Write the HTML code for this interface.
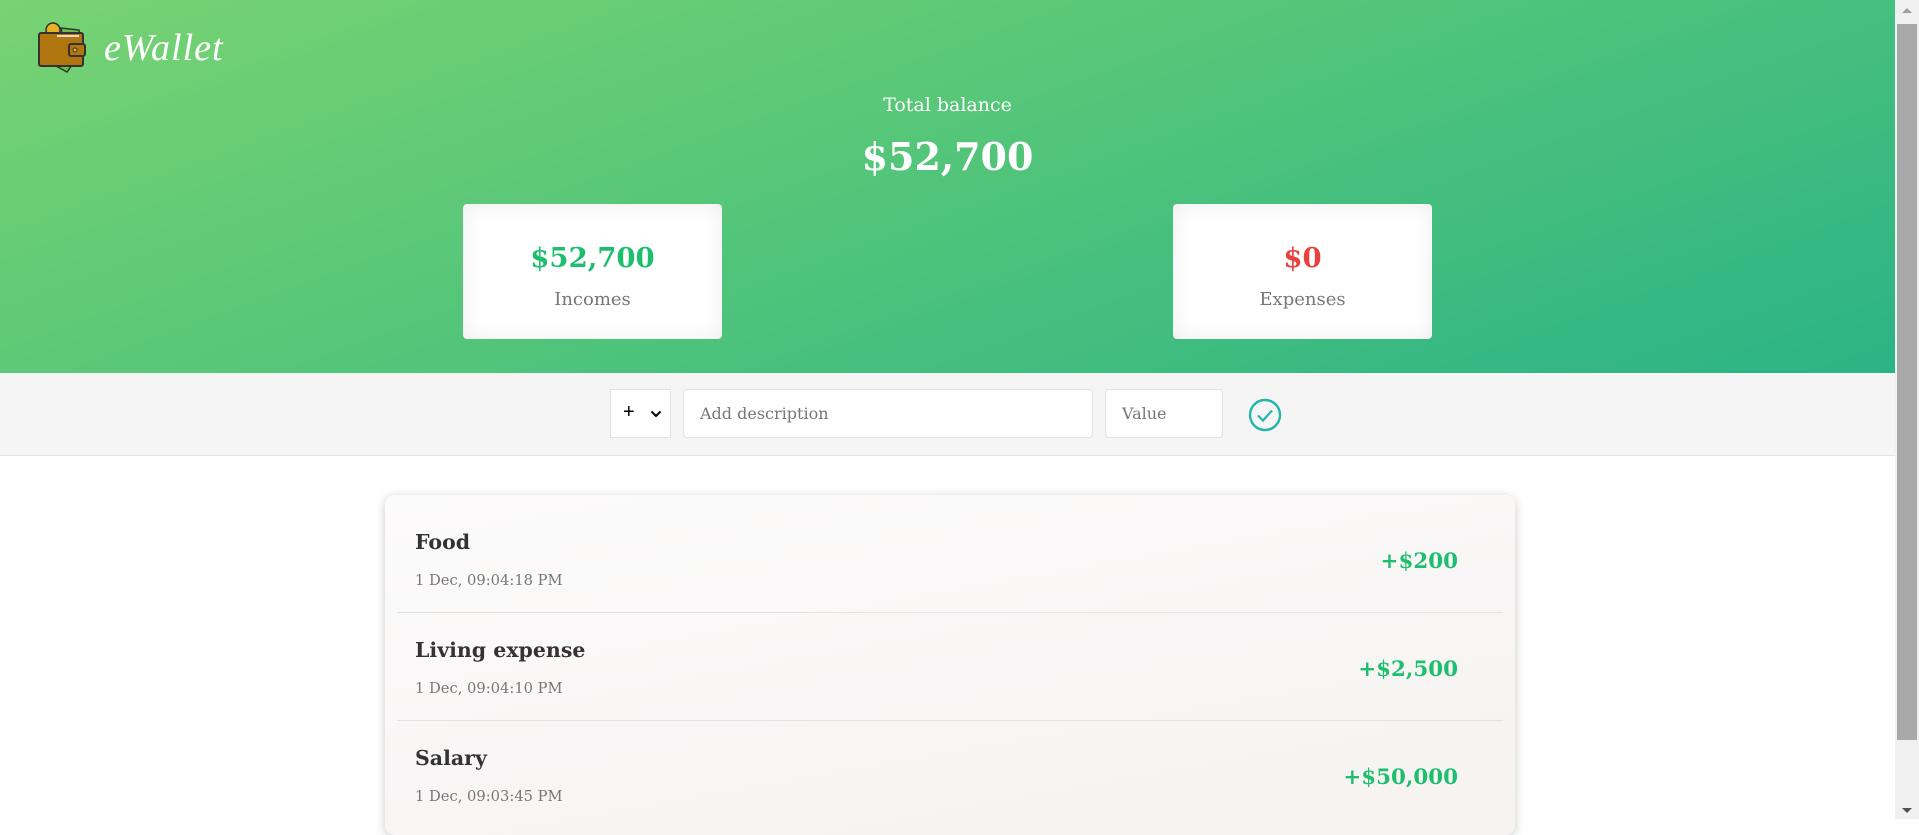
<!DOCTYPE html>
<html><head><meta charset="utf-8"><style>
*{margin:0;padding:0;box-sizing:border-box}
html,body{width:1919px;height:819px;overflow:hidden;background:#fff;font-family:"DejaVu Serif","Liberation Serif",serif}
.hdr{position:absolute;left:0;top:0;width:1895px;height:373px;background:linear-gradient(160deg,#79d372 0%,#55c679 45%,#2bb386 100%)}
.logo{position:absolute;left:37px;top:22px}
.brand{position:absolute;left:104px;top:26px;color:#fff;font-family:"Liberation Serif",serif;font-style:italic;font-size:38px;letter-spacing:1px}
.tb{position:absolute;left:0;width:1895px;text-align:center;color:#fff}
.card{position:absolute;top:204px;width:259px;height:135px;background:#fff;border-radius:4px;box-shadow:inset 0 0 20px rgba(0,0,0,.08);text-align:center}
.card .v{position:absolute;left:0;right:0;top:38px;font-size:27.5px;font-weight:bold}
.card .l{position:absolute;left:0;right:0;top:85px;font-size:18px;color:#777}
.bar{position:absolute;left:0;top:373px;width:1895px;height:83px;background:#f5f5f5;border-bottom:1px solid #e4e4e4}
.in{position:absolute;top:16px;height:49px;background:#fff;border:1px solid #e2e2e2;border-radius:4px;font-size:16px;color:#777;padding:14px 16px;white-space:nowrap}
.list{position:absolute;left:385px;top:495px;width:1130px;height:340px;border-radius:10px;background:linear-gradient(170deg,#fcfbfb,#f5f2f1);box-shadow:0 2px 10px rgba(0,0,0,.22)}
.row{position:absolute;left:12px;right:12px;height:108px;border-bottom:1px solid #e2e2e2}
.row .t{position:absolute;left:18px;top:25px;font-size:20.5px;font-weight:bold;color:#333}
.row .d{position:absolute;left:18px;top:67px;font-size:14.7px;color:#777}
.row .a{position:absolute;right:45px;top:44px;font-size:21.4px;font-weight:bold;color:#1dbf6f}
.sb{position:absolute;left:1895px;top:0;width:24px;height:819px;background:#f0f0f0}
.th{position:absolute;left:2px;top:24px;width:20px;height:716px;background:#a8a8a8}
</style></head><body>
<div class="hdr">
<svg class="logo" width="52" height="54" viewBox="0 0 52 54">
<polygon points="8,38 30,50 40,36 20,26" fill="#6cc04a" stroke="#333" stroke-width="1.5"/>
<polygon points="24,6 42,8 44,20 26,18" fill="#6cc04a" stroke="#333" stroke-width="1.5"/>
<circle cx="16" cy="8" r="7" fill="#e8b323" stroke="#333" stroke-width="1.5"/>
<rect x="2" y="11" width="44" height="33" rx="2" fill="#b0750f" stroke="#333" stroke-width="2"/>
<line x1="20" y1="14" x2="42" y2="14" stroke="#fff" stroke-width="1.5"/>
<rect x="32" y="22" width="16" height="12" rx="2" fill="#b0750f" stroke="#333" stroke-width="2"/>
<circle cx="38" cy="28" r="2" fill="#e8b323" stroke="#333"/>
</svg>
<div class="brand">eWallet</div>
<div class="tb" style="top:94px;font-size:19px">Total balance</div>
<div class="tb" style="top:134px;font-size:38px;font-weight:bold">$52,700</div>
<div class="card" style="left:463px"><div class="v" style="color:#1dbf6f">$52,700</div><div class="l">Incomes</div></div>
<div class="card" style="left:1173px"><div class="v" style="color:#e8413e">$0</div><div class="l">Expenses</div></div>
</div>
<div class="bar">
<div class="in" style="left:610px;width:61px;border-radius:0;color:#000;padding:11px 12px;font-family:'Liberation Sans',sans-serif;font-size:20px">+<svg style="position:absolute;left:39px;top:20px" width="12" height="8" viewBox="0 0 12 8"><path d="M1.5 1.5l4.5 4.5 4.5-4.5" fill="none" stroke="#000" stroke-width="2"/></svg></div>
<div class="in" style="left:683px;width:410px">Add description</div>
<div class="in" style="left:1105px;width:118px">Value</div>
<svg style="position:absolute;left:1248px;top:25px" width="34" height="34" viewBox="0 0 34 34"><circle cx="17" cy="17" r="15" fill="none" stroke="#22b5b0" stroke-width="2.4"/><path d="M10 17.5l5 5 9-10" fill="none" stroke="#22b5b0" stroke-width="2.2"/></svg>
</div>
<div class="list">
<div class="row" style="top:10px"><div class="t">Food</div><div class="d">1 Dec, 09:04:18 PM</div><div class="a">+$200</div></div>
<div class="row" style="top:118px"><div class="t">Living expense</div><div class="d">1 Dec, 09:04:10 PM</div><div class="a">+$2,500</div></div>
<div class="row" style="top:226px;border:none"><div class="t">Salary</div><div class="d">1 Dec, 09:03:45 PM</div><div class="a">+$50,000</div></div>
</div>
<div class="sb"><div class="th"></div>
<div style="position:absolute;left:7px;top:8px;border:5px solid transparent;border-bottom-color:#a0a0a0;border-top:0"></div>
<div style="position:absolute;left:7px;top:808px;border:5px solid transparent;border-top-color:#505050;border-bottom:0"></div></div>
</body></html>
